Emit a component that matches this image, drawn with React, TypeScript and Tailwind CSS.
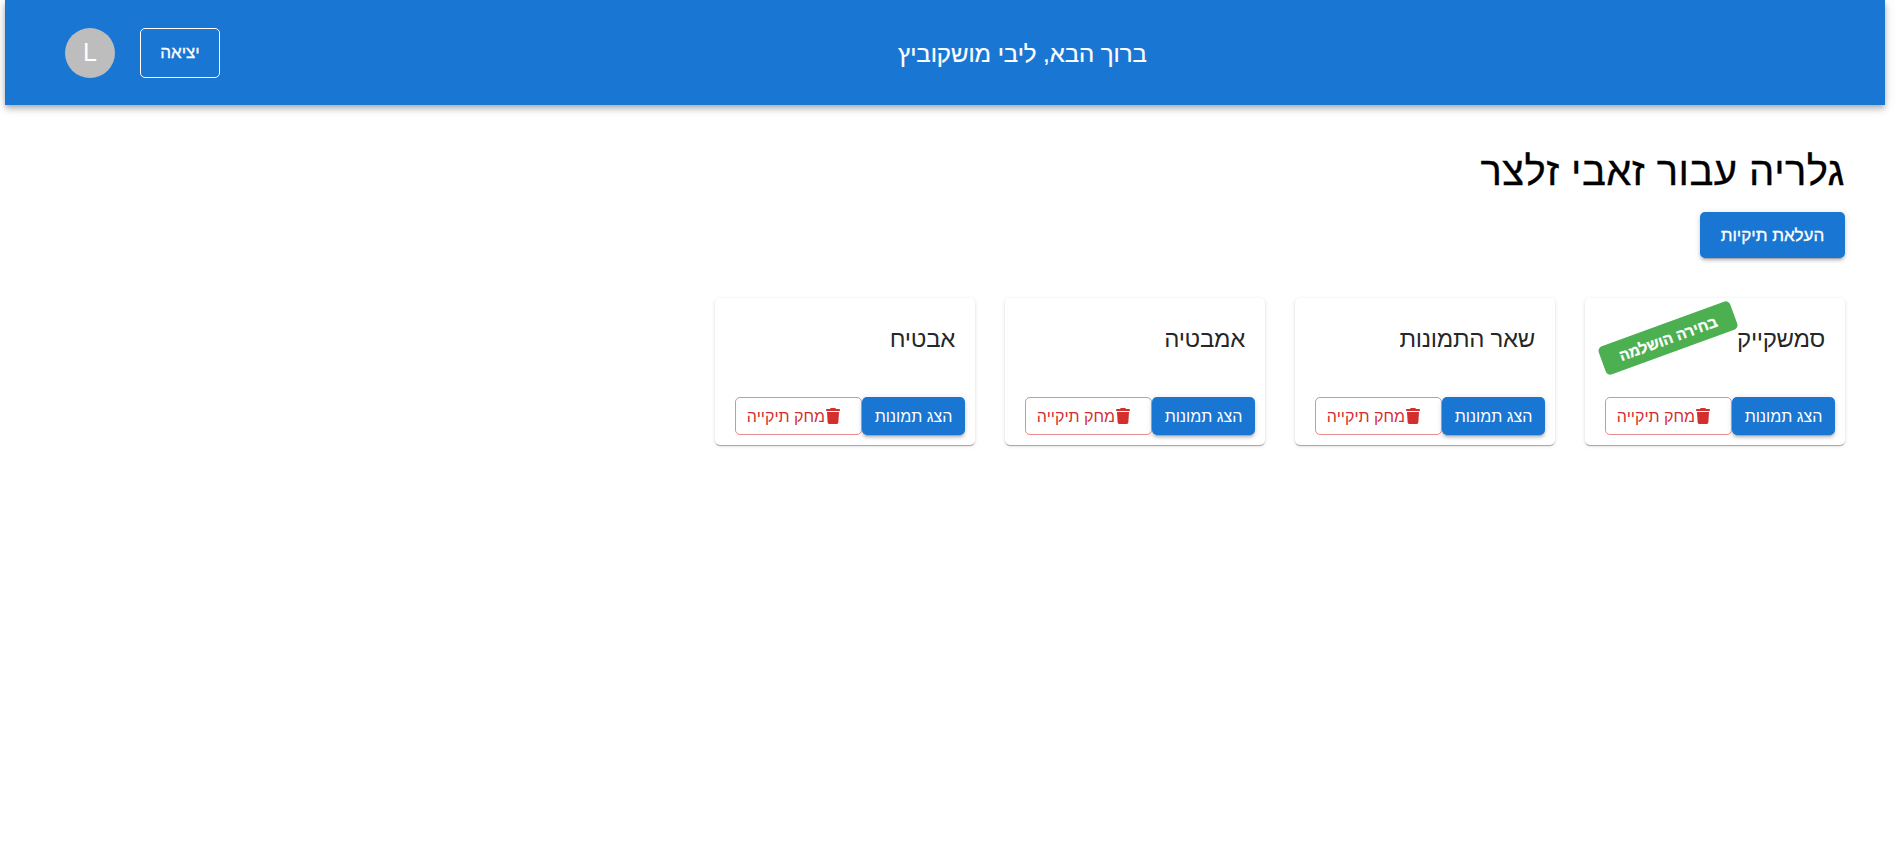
import { FaTrash } from "react-icons/fa6";

type Folder = { name: string; done?: boolean };

const folders: Folder[] = [
  { name: "סמשקייק", done: true },
  { name: "שאר התמונות" },
  { name: "אמבטיה" },
  { name: "אבטיח" },
];

function Header() {
  return (
    <header className="flex h-[105px] items-center bg-[#1976d2] px-[60px] text-white shadow-[0_2px_5px_-1px_rgba(0,0,0,0.2),0_5px_6px_0_rgba(0,0,0,0.14),0_1px_12px_0_rgba(0,0,0,0.12)]">
      <h1 className="flex-1 pt-[3px] text-center text-[24px] leading-8 tracking-[-0.05px] [-webkit-text-stroke:0.2px]">ברוך הבא, ליבי מושקוביץ</h1>
      <div className="flex items-center gap-[25px]">
        <button className="h-[50px] w-20 rounded-[5px] border border-white text-[17px] font-medium [-webkit-text-stroke:0.3px]">יציאה</button>
        <div className="flex size-[50px] items-center justify-center rounded-full bg-[#bdbdbd] text-[25px]">L</div>
      </div>
    </header>
  );
}

function FolderCard({ name, done }: Folder) {
  return (
    <article className="relative flex h-[147px] w-[260px] flex-col justify-between rounded-[5px] bg-white pb-[10px] shadow-[0_2px_1px_-1px_rgba(0,0,0,0.2),0_1px_1px_0_rgba(0,0,0,0.14),0_1px_4px_0_rgba(0,0,0,0.12)]">
      <h3 className="px-5 pt-[25px] text-[24px] leading-8 tracking-[-0.3px] text-black/87">{name}</h3>
      {done && (
        <span className="absolute top-[25px] left-[13px] flex h-[30px] w-[140px] -rotate-20 items-center justify-center rounded-[5px] bg-[#4caf50] pt-0.5 text-[15px] font-bold text-white [-webkit-text-stroke:0.3px]">
          בחירה הושלמה
        </span>
      )}
      <div className="flex px-[10px]">
        <button className="h-[38px] w-[103px] rounded-[5px] bg-[#1976d2] pt-px text-[16px] font-medium text-white shadow-[0_4px_1px_-3px_rgba(0,0,0,0.2),0_3px_3px_0_rgba(0,0,0,0.14),0_1px_6px_0_rgba(0,0,0,0.12)]">
          הצג תמונות
        </button>
        <button className="flex h-[38px] w-[127px] items-center rounded-[5px] border border-[#d32f2f]/55 pr-[20px] text-[16px] whitespace-nowrap text-[#d32f2f]">
          <FaTrash className="size-4" />
          <span className="pt-0.5">מחק תיקייה</span>
        </button>
      </div>
    </article>
  );
}

export default function App() {
  return (
    <div dir="rtl" className="min-h-[847px] overflow-hidden bg-white pr-[15px] pl-[5px] font-['Liberation_Sans',sans-serif]">
      <Header />
      <main className="flex flex-col items-start px-10 pt-[41px]">
        <h2 className="text-[40px] leading-[50px] tracking-[0.45px] text-black [-webkit-text-stroke:0.3px]">גלריה עבור זאבי זלצר</h2>
        <button className="mt-4 h-[46px] w-[145px] rounded-[5px] bg-[#1976d2] pt-px text-[17px] font-medium text-white shadow-[0_4px_1px_-3px_rgba(0,0,0,0.2),0_3px_3px_0_rgba(0,0,0,0.14),0_1px_6px_0_rgba(0,0,0,0.12)] [-webkit-text-stroke:0.3px]">
          העלאת תיקיות
        </button>
        <section className="mt-10 flex gap-[30px]">
          {folders.map((f) => (
            <FolderCard key={f.name} {...f} />
          ))}
        </section>
      </main>
    </div>
  );
}
